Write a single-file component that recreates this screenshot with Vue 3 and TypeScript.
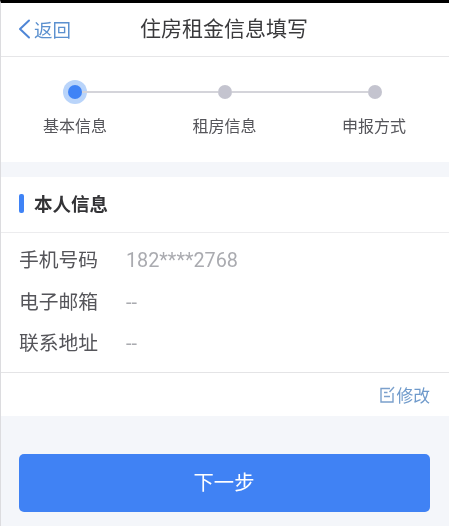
<script setup lang="ts">
const steps = [
  { label: '基本信息', active: true },
  { label: '租房信息', active: false },
  { label: '申报方式', active: false },
]
const rows = [
  { label: '手机号码', value: '182****2768' },
  { label: '电子邮箱', value: '--' },
  { label: '联系地址', value: '--' },
]
</script>

<template>
  <div class="page">
    <header class="nav">
      <a class="back">
        <svg class="chev" viewBox="0 0 14 20" width="14" height="20" aria-hidden="true">
          <path d="M12 1.5 L3 10 L12 18.5" fill="none" stroke="#4f86d6" stroke-width="2" stroke-linecap="round" stroke-linejoin="round" />
        </svg>
        <span>返回</span>
      </a>
      <h1 class="title">住房租金信息填写</h1>
    </header>

    <section class="steps">
      <div class="track">
        <template v-for="(s, i) in steps" :key="s.label">
          <span class="line" v-if="i > 0"></span>
          <span class="dot" :class="{ on: s.active }"></span>
        </template>
      </div>
      <div class="labels">
        <span v-for="s in steps" :key="s.label">{{ s.label }}</span>
      </div>
    </section>

    <section class="card">
      <div class="card-head">
        <span class="mark"></span>
        <h2>本人信息</h2>
      </div>
      <dl class="rows">
        <div class="row" v-for="r in rows" :key="r.label">
          <dt>{{ r.label }}</dt>
          <dd>{{ r.value }}</dd>
        </div>
      </dl>
      <div class="edit">
        <svg viewBox="0 0 16 18" width="16" height="18" aria-hidden="true">
          <path d="M11 2.5 H2 V16 H14 V7 M5 6.5 H8.5 M5 10.5 H11 M15 1 L10.5 6" fill="none" stroke="#7ba0cc" stroke-width="1.4" />
        </svg>
        <span>修改</span>
      </div>
    </section>

    <div class="foot">
      <button class="next" type="button">下一步</button>
    </div>
  </div>
</template>

<style>
html, body { margin: 0; background: #f4f6fa; }
</style>

<style scoped>
.page {
  width: 449px;
  height: 526px;
  box-sizing: border-box;
  border-top: 3px solid #000;
  border-left: 1px solid #dcdcdf;
  background: #f4f6fa;
  font-family: "Liberation Sans", "Noto Sans CJK SC", sans-serif;
  display: flex;
  flex-direction: column;
  overflow: hidden;
  filter: blur(0.4px);
}
.nav {
  height: 54px;
  flex: none;
  box-sizing: border-box;
  background: #fff;
  border-bottom: 1px solid #e6e6e8;
  display: flex;
  align-items: center;
  padding: 0 0 2px 16px;
}
.back {
  display: flex;
  align-items: center;
  gap: 3px;
  color: #5b90cf;
  font-size: 18.5px;
}
.title {
  margin: 0 0 3px 69px;
  font-size: 21px;
  font-weight: 400;
  color: #3a3a3c;
  white-space: nowrap;
}
.steps {
  height: 105px;
  flex: none;
  background: #fff;
  box-sizing: border-box;
  padding-top: 28px;
}
.track {
  display: flex;
  align-items: center;
  padding: 0 67px;
}
.dot {
  width: 14px;
  height: 14px;
  flex: none;
  border-radius: 50%;
  background: #c4c4cf;
}
.dot.on {
  background: #3f83f6;
  box-shadow: 0 0 0 5px #b9d4fa;
}
.line {
  flex: 1;
  height: 2px;
  background: #d4d4da;
}
.labels {
  display: flex;
  justify-content: space-between;
  padding: 18px 43px 0 42px;
  font-size: 16px;
  line-height: 20px;
  color: #55555a;
}
.card {
  margin-top: 15px;
  background: #fff;
  flex: none;
}
.card-head {
  height: 56px;
  box-sizing: border-box;
  border-bottom: 1px solid #ececee;
  display: flex;
  align-items: center;
  padding: 0 0 3px 18px;
  gap: 10px;
}
.mark {
  width: 5px;
  height: 19px;
  border-radius: 2px;
  background: #3f83f6;
}
.card-head h2 {
  margin: 0;
  font-size: 18.5px;
  font-weight: 700;
  color: #333336;
}
.rows {
  margin: 0;
  height: 140px;
  box-sizing: border-box;
  padding-top: 6px;
  border-bottom: 1px solid #e4e4e6;
}
.row {
  height: 41.5px;
  display: flex;
  align-items: center;
  padding-left: 18px;
}
dt {
  width: 107px;
  font-size: 19.8px;
  color: #55555a;
  padding-bottom: 2px;
}
dd {
  margin: 0;
  padding-top: 2px;
  font-size: 19.8px;
  color: #aaabb0;
  font-family: "Roboto", "Liberation Sans", sans-serif;
}
.edit {
  height: 43px;
  display: flex;
  align-items: center;
  justify-content: flex-end;
  gap: 1px;
  padding-right: 19px;
  font-size: 16.8px;
  color: #6f9acb;
}
.foot {
  padding: 38px 19px 0 18px;
}
.next {
  display: block;
  width: 100%;
  height: 58px;
  border: 0;
  border-radius: 5px;
  background: #4082f4;
  color: #fff;
  font: inherit;
  font-size: 20.3px;
  padding: 0 1px 5px 0;
}
</style>
